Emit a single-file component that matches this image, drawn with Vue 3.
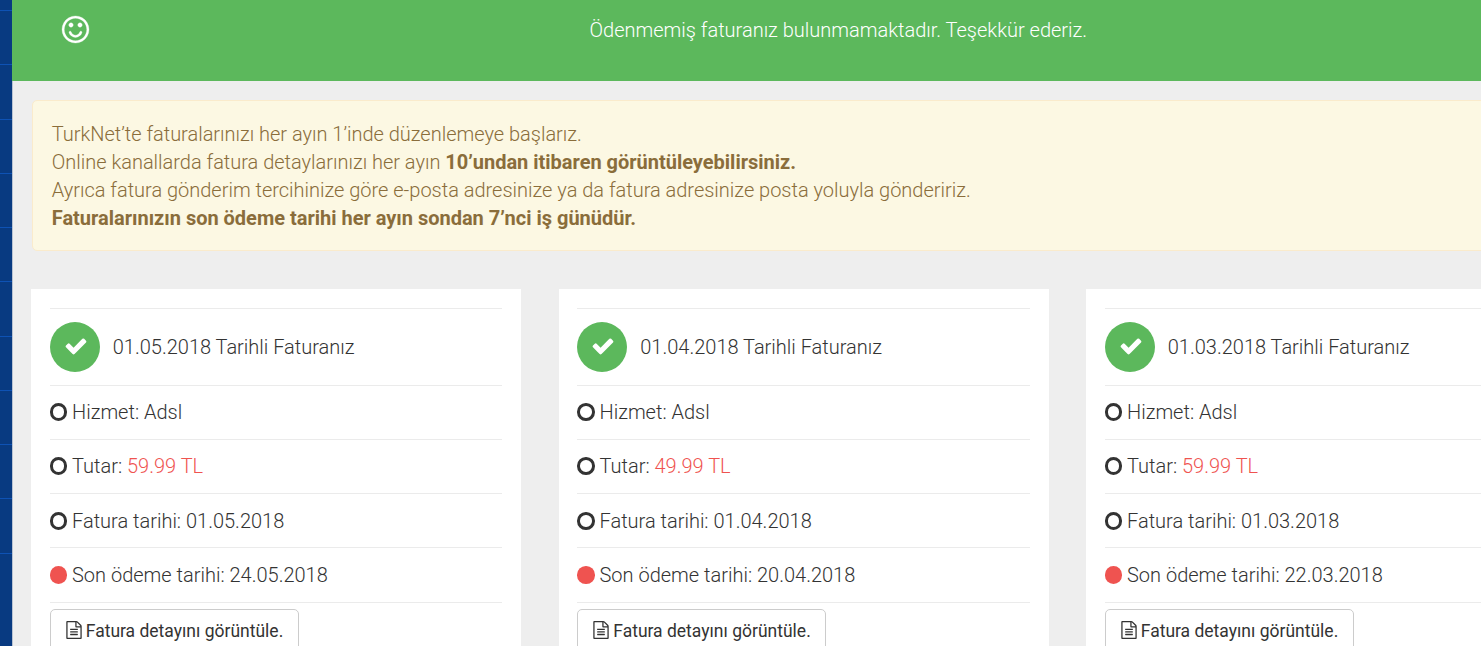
<template>
  <div class="page">
    <aside class="sidebar">
      <div v-for="n in 11" :key="n" class="sidebar__item"></div>
    </aside>

    <main class="content">
      <header class="status">
        <svg class="status__icon" viewBox="128 128 1536 1536">
          <path d="M1262 1075q-37 121-138 195t-228 74-228-74-138-195q-8-25 4-48.5t38-31.5q25-8 48.5 4t31.5 38q25 80 92.5 129.5t151.5 49.5 151.5-49.5 92.5-129.5q8-26 32-38t49-4 37 31.5 4 48.5zm-494-435q0 53-37.5 90.5t-90.5 37.5-90.5-37.5-37.5-90.5 37.5-90.5 90.5-37.5 90.5 37.5 37.5 90.5zm512 0q0 53-37.5 90.5t-90.5 37.5-90.5-37.5-37.5-90.5 37.5-90.5 90.5-37.5 90.5 37.5 37.5 90.5zm256 256q0-130-51-248.5t-136.5-204-204-136.5-248.5-51-248.5 51-204 136.5-136.5 204-51 248.5 51 248.5 136.5 204 204 136.5 248.5 51 248.5-51 204-136.5 136.5-204 51-248.5zm128 0q0 209-103 385.5t-279.5 279.5-385.5 103-385.5-103-279.5-279.5-103-385.5 103-385.5 279.5-279.5 385.5-103 385.5 103 279.5 279.5 103 385.5z" />
        </svg>
        <p class="status__text">Ödenmemiş faturanız bulunmamaktadır. Teşekkür ederiz.</p>
      </header>

      <section class="notice">
        <p>TurkNet’te faturalarınızı her ayın 1’inde düzenlemeye başlarız.</p>
        <p>Online kanallarda fatura detaylarınızı her ayın <b>10’undan itibaren görüntüleyebilirsiniz.</b></p>
        <p>Ayrıca fatura gönderim tercihinize göre e-posta adresinize ya da fatura adresinize posta yoluyla göndeririz.</p>
        <p><b>Faturalarınızın son ödeme tarihi her ayın sondan 7’nci iş günüdür.</b></p>
      </section>

      <section class="invoices">
        <article v-for="invoice in invoices" :key="invoice.date" class="invoice">
          <div class="invoice__head">
            <span class="invoice__badge">
              <svg viewBox="0 0 1792 1792">
                <path d="M1671 566q0 40-28 68l-724 724-136 136q-28 28-68 28t-68-28l-136-136-362-362q-28-28-28-68t28-68l136-136q28-28 68-28t68 28l294 295 656-657q28-28 68-28t68 28l136 136q28 28 28 68z" />
              </svg>
            </span>
            <span>{{ invoice.date }} Tarihli Faturanız</span>
          </div>
          <div class="invoice__row"><i class="dot"></i>Hizmet: Adsl</div>
          <div class="invoice__row">
            <i class="dot"></i><span>Tutar: <span class="invoice__amount">{{ invoice.amount }} TL</span></span>
          </div>
          <div class="invoice__row"><i class="dot"></i>Fatura tarihi: {{ invoice.date }}</div>
          <div class="invoice__row"><i class="dot dot--due"></i>Son ödeme tarihi: {{ invoice.due }}</div>
          <div class="invoice__footer">
            <button type="button" class="invoice__btn">
              <svg viewBox="128 0 1536 1792">
                <path d="M1596 380q28 28 48 76t20 88v1152q0 40-28 68t-68 28h-1344q-40 0-68-28t-28-68v-1600q0-40 28-68t68-28h896q40 0 88 20t76 48zm-444-244v376h376q-10-29-22-41l-313-313q-12-12-41-22zm384 1528v-1024h-416q-40 0-68-28t-28-68v-416h-768v1536h1280zm-1024-864q0-14 9-23t23-9h704q14 0 23 9t9 23v64q0 14-9 23t-23 9h-704q-14 0-23-9t-9-23v-64zm736 224q14 0 23 9t9 23v64q0 14-9 23t-23 9h-704q-14 0-23-9t-9-23v-64q0-14 9-23t23-9h704zm0 256q14 0 23 9t9 23v64q0 14-9 23t-23 9h-704q-14 0-23-9t-9-23v-64q0-14 9-23t23-9h704z" />
              </svg>
              <span>Fatura detayını görüntüle.</span>
            </button>
          </div>
        </article>
      </section>
    </main>
  </div>
</template>

<script setup>
const invoices = [
  { date: '01.05.2018', amount: '59.99', due: '24.05.2018' },
  { date: '01.04.2018', amount: '49.99', due: '20.04.2018' },
  { date: '01.03.2018', amount: '59.99', due: '22.03.2018' },
]
</script>

<style>
body {
  margin: 0;
  overflow: hidden;
}
</style>

<style scoped>
.page {
  display: flex;
  height: 646px;
  overflow: hidden;
  background: #eee;
  color: #333;
  font-family: Roboto, "Liberation Sans", sans-serif;
  font-size: 20px;
  font-weight: 300;
  line-height: 28px;
}

.sidebar {
  flex: none;
  width: 12px;
  overflow: hidden;
  background: #083a81;
}

.sidebar__item {
  box-sizing: border-box;
  height: 54.25px;
  border-bottom: 1px solid #0e52b4;
}

.sidebar__item:first-child {
  height: 11px;
}

.content {
  flex: 1;
  min-width: 0;
  box-shadow: inset 1px 0 #b9c3d2;
}

.status {
  display: flex;
  align-items: flex-start;
  box-sizing: border-box;
  height: 81px;
  padding: 16px 0 0 50px;
  background: #5cb85c;
  color: #fff;
}

.status__icon {
  flex: none;
  width: 27px;
  height: 27px;
  overflow: visible;
  fill: currentColor;
  stroke: currentColor;
  stroke-width: 16;
}

.status__text {
  margin: 0 0 0 500.5px;
  white-space: nowrap;
}

.notice {
  box-sizing: border-box;
  width: 1545px;
  height: 151px;
  margin: 19px 0 0 20px;
  padding: 19px 18.75px;
  border: 1px solid #faebcc;
  border-radius: 5px;
  background: #fcf8e3;
  color: #8a6d3b;
}

.notice p {
  margin: 0;
  letter-spacing: -0.01px;
  white-space: nowrap;
}

.notice b {
  font-weight: 700;
}

.invoices {
  display: flex;
  gap: 37.5px;
  margin: 38px 0 0 19px;
}

.invoice {
  flex: none;
  box-sizing: border-box;
  width: 490px;
  height: 420px;
  padding: 19px 18.75px;
  background: #fff;
}

.invoice__head,
.invoice__row,
.invoice__footer {
  display: flex;
  align-items: center;
  box-sizing: border-box;
  border-top: 1px solid #ebebeb;
}

.invoice__head {
  height: 77px;
  gap: 13px;
}

.invoice__row {
  height: 54.15px;
  padding-bottom: 1px;
}

.invoice__row:nth-child(n + 4) {
  padding-bottom: 0;
}

.invoice__badge {
  display: flex;
  align-items: center;
  justify-content: center;
  box-sizing: border-box;
  width: 50px;
  height: 50px;
  padding: 0 0 3px 1.5px;
  border-radius: 50%;
  background: #5cb85c;
}

.invoice__badge svg {
  width: 24px;
  height: 24px;
  fill: #fff;
}

.invoice__amount {
  color: #ef5350;
}

.dot {
  flex: none;
  box-sizing: border-box;
  width: 17.5px;
  height: 17.5px;
  margin: 0 4.75px 0 0;
  border: 3px solid #333;
  border-radius: 50%;
}

.dot--due {
  border: 0;
  background: #ef5350;
}

.invoice__footer {
  padding-top: 6.4px;
}

.invoice__btn {
  display: flex;
  align-items: center;
  box-sizing: border-box;
  width: 249px;
  height: 45px;
  padding: 0 15px;
  border: 1px solid #ccc;
  border-radius: 5px;
  background: #fff;
  color: #333;
  font: 400 17.5px/25px Roboto, "Liberation Sans", sans-serif;
  white-space: nowrap;
}

.invoice__btn svg {
  flex: none;
  width: 16px;
  height: 18px;
  margin: 0 4px 2px 0;
  fill: currentColor;
}
</style>
